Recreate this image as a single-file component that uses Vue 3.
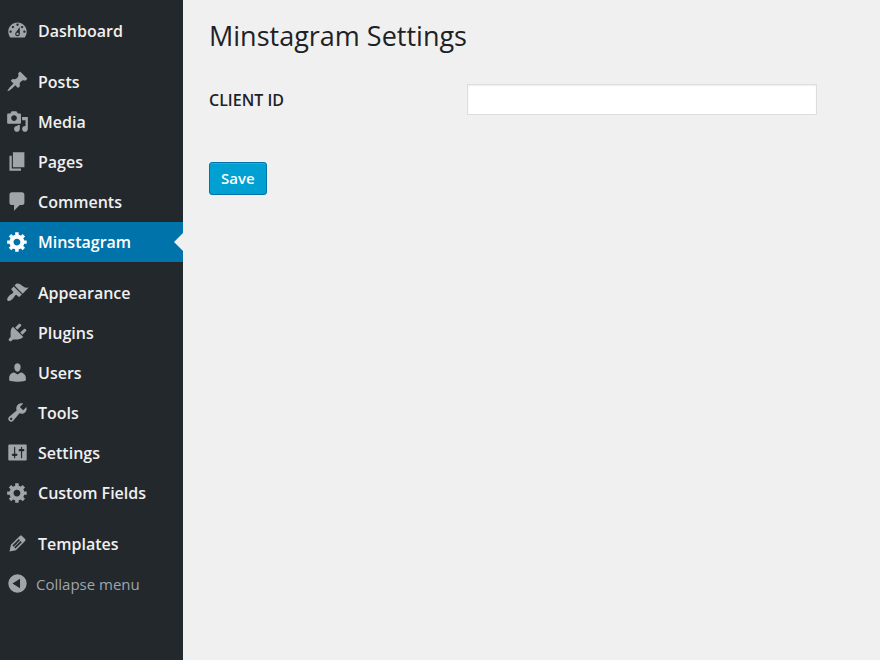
<script setup>
import { ref } from 'vue'

const clientId = ref('')

const gear =
  'M18 12h-2.18c-.17.7-.44 1.35-.81 1.93l1.54 1.54-2.1 2.1-1.54-1.54c-.58.36-1.23.63-1.91.79V19H8v-2.18c-.68-.16-1.33-.43-1.91-.79l-1.54 1.54-2.12-2.12 1.54-1.54c-.36-.58-.63-1.23-.79-1.91H1V9.03h2.17c.16-.7.44-1.35.8-1.94L2.43 5.55l2.1-2.1 1.54 1.54c.58-.37 1.24-.64 1.93-.81V2h3v2.18c.68.16 1.33.43 1.91.79l1.54-1.54 2.12 2.12-1.54 1.54c.36.59.64 1.24.8 1.94H18V12zm-8.5 1.5c1.66 0 3-1.34 3-3s-1.34-3-3-3-3 1.34-3 3 1.34 3 3 3z'

const groups = [
  [
    {
      label: 'Dashboard',
      icon: 'M3.76 16h12.48c1.1-1.37 1.76-3.11 1.76-5 0-4.42-3.58-8-8-8s-8 3.58-8 8c0 1.89.66 3.63 1.76 5zM10 4c.55 0 1 .45 1 1s-.45 1-1 1-1-.45-1-1 .45-1 1-1zM6 6c.55 0 1 .45 1 1s-.45 1-1 1-1-.45-1-1 .45-1 1-1zm8 0c.55 0 1 .45 1 1s-.45 1-1 1-1-.45-1-1 .45-1 1-1zm-5.37 5.55L12 7v6c0 1.1-.9 2-2 2s-2-.9-2-2c0-.57.24-1.08.63-1.45zM4 10c.55 0 1 .45 1 1s-.45 1-1 1-1-.45-1-1 .45-1 1-1zm12 0c.55 0 1 .45 1 1s-.45 1-1 1-1-.45-1-1 .45-1 1-1zm-5 3c0-.55-.45-1-1-1s-1 .45-1 1 .45 1 1 1 1-.45 1-1z',
    },
  ],
  [
    {
      label: 'Posts',
      icon: 'M10.44 3.02l1.82-1.82 6.36 6.35-1.83 1.82c-1.05-.68-2.48-.57-3.41.36l-.75.75c-.92.93-1.04 2.35-.35 3.41l-1.83 1.82-2.41-2.41-2.8 2.79c-.42.42-3.38 2.71-3.8 2.29s1.86-3.39 2.28-3.81l2.79-2.79L4.1 9.36l1.83-1.82c1.05.69 2.48.57 3.4-.36l.75-.75c.93-.92 1.05-2.35.36-3.41z',
    },
    {
      label: 'Media',
      icon: 'M13 11V4c0-.55-.45-1-1-1h-1.67L9 1H5L3.67 3H2c-.55 0-1 .45-1 1v7c0 .55.45 1 1 1h10c.55 0 1-.45 1-1zM7 4.5c1.38 0 2.5 1.12 2.5 2.5S8.38 9.5 7 9.5 4.5 8.38 4.5 7 5.62 4.5 7 4.5zM14 6h5v10.5c0 1.38-1.12 2.5-2.5 2.5S14 17.88 14 16.5s1.12-2.5 2.5-2.5c.17 0 .34.02.5.05V9h-3V6zm-4 8.05V13h2v3.5c0 1.38-1.12 2.5-2.5 2.5S7 17.88 7 16.5 8.12 14 9.5 14c.17 0 .34.02.5.05z',
    },
    { label: 'Pages', icon: 'M6 15V2h10v13H6zm-1 1h8v2H3V5h2v11z' },
    {
      label: 'Comments',
      icon: 'M5 2h9c1.1 0 2 .9 2 2v7c0 1.1-.9 2-2 2h-2l-5 5v-5H5c-1.1 0-2-.9-2-2V4c0-1.1.9-2 2-2z',
    },
    { label: 'Minstagram', icon: gear, current: true },
  ],
  [
    {
      label: 'Appearance',
      icon: 'M14.48 11.06L7.41 3.99l1.5-1.5c.5-.56 2.3-.47 3.51.32 1.21.8 1.43 1.28 2.91 2.1 1.18.64 2.45 1.26 4.45.85zm-.71.71L6.7 4.7 4.93 6.47c-.39.39-.39 1.02 0 1.41l1.06 1.06c.39.39.39 1.03 0 1.42-.6.6-1.43 1.11-2.21 1.69-.35.26-.7.53-1.01.84C1.43 14.23.4 16.08 1.4 17.07c.99 1 2.84-.03 4.18-1.36.31-.31.58-.66.85-1.02.57-.78 1.08-1.61 1.69-2.21.39-.39 1.02-.39 1.41 0l1.06 1.06c.39.39 1.02.39 1.41 0z',
    },
    {
      label: 'Plugins',
      icon: 'M13.11 4.36L9.87 7.6 8 5.73l3.24-3.24c.35-.34 1.05-.2 1.56.32.52.51.66 1.21.31 1.55zm-8 1.77l.91-1.12 9.01 9.01-1.19.84c-.71.71-2.63 1.16-3.82 1.16H6.14L4.9 17.26c-.59.59-1.54.59-2.12 0-.59-.58-.59-1.53 0-2.12l1.24-1.24v-3.88c0-1.13.4-3.19 1.09-3.89zm7.26 3.97l3.24-3.24c.34-.35 1.04-.21 1.55.31.52.51.66 1.21.31 1.55l-3.24 3.25z',
    },
    {
      label: 'Users',
      icon: 'M10 9.25c-2.27 0-2.73-3.44-2.73-3.44C7 4.02 7.82 2 9.97 2c2.16 0 2.98 2.02 2.71 3.81 0 0-.41 3.44-2.68 3.44zm0 2.57L12.72 10c2.39 0 4.52 2.33 4.52 4.53v2.49s-3.65 1.13-7.24 1.13c-3.65 0-7.24-1.13-7.24-1.13v-2.49c0-2.25 1.94-4.48 4.47-4.48z',
    },
    {
      label: 'Tools',
      icon: 'M16.68 9.77c-1.34 1.34-3.3 1.67-4.95.99l-5.41 6.52c-.99.99-2.59.99-3.58 0s-.99-2.59 0-3.57l6.52-5.42c-.68-1.65-.35-3.61.99-4.95 1.28-1.28 3.12-1.62 4.72-1.06l-2.89 2.89 2.82 2.82 2.86-2.87c.53 1.58.18 3.39-1.08 4.65zM3.81 16.21c.4.39 1.04.39 1.43 0 .4-.4.4-1.04 0-1.43-.39-.4-1.03-.4-1.43 0-.39.39-.39 1.03 0 1.43z',
    },
    {
      label: 'Settings',
      icon: 'M18 16V4c0-.55-.45-1-1-1H3c-.55 0-1 .45-1 1v12c0 .55.45 1 1 1h14c.55 0 1-.45 1-1zM8 11h1c.55 0 1 .45 1 1s-.45 1-1 1H8v1.5c0 .28-.22.5-.5.5s-.5-.22-.5-.5V13H6c-.55 0-1-.45-1-1s.45-1 1-1h1V5.5c0-.28.22-.5.5-.5s.5.22.5.5V11zm5-2h-1c-.55 0-1-.45-1-1s.45-1 1-1h1V5.5c0-.28.22-.5.5-.5s.5.22.5.5V7h1c.55 0 1 .45 1 1s-.45 1-1 1h-1v5.5c0 .28-.22.5-.5.5s-.5-.22-.5-.5V9z',
    },
    { label: 'Custom Fields', icon: gear },
  ],
  [
    {
      label: 'Templates',
      icon: 'M13.89 3.39l2.71 2.72c.46.46.42 1.24.03 1.64l-8.01 8.02-5.56 1.16 1.16-5.58s7.6-7.63 7.99-8.03c.39-.39 1.22-.39 1.68.07zm-2.73 2.79l-5.59 5.61 1.11 1.11 5.54-5.65zm-2.97 8.23l5.58-5.6-1.07-1.08-5.59 5.6z',
    },
  ],
]
</script>

<template>
  <div class="admin">
    <nav class="sidebar" aria-label="Main menu">
      <ul v-for="(group, i) in groups" :key="i" class="group">
        <li v-for="item in group" :key="item.label">
          <a
            href="#"
            class="item"
            :class="{ current: item.current }"
            :aria-current="item.current ? 'page' : null"
          >
            <svg class="icon" viewBox="0 0 20 20" aria-hidden="true">
              <path :d="item.icon" fill-rule="evenodd" />
            </svg>
            {{ item.label }}
          </a>
        </li>
      </ul>
      <button type="button" class="item collapse">
        <svg class="icon" viewBox="0 0 20 20" aria-hidden="true">
          <path d="M10 2a8 8 0 1 0 0 16 8 8 0 0 0 0-16zM12.2 5.8v8.4L5.6 10z" fill-rule="evenodd" />
        </svg>
        Collapse menu
      </button>
    </nav>

    <main class="content">
      <h1 class="title">Minstagram Settings</h1>
      <form @submit.prevent>
        <div class="field">
          <label for="client-id">CLIENT ID</label>
          <input id="client-id" v-model="clientId" type="text" />
        </div>
        <button type="submit" class="save">Save</button>
      </form>
    </main>
  </div>
</template>

<style>
body {
  background: #f0f0f0;
}
</style>

<style scoped>
.admin {
  display: grid;
  grid-template-columns: 183px 1fr;
  min-height: 100vh;
  font-family: 'Open Sans', 'Noto Sans', sans-serif;
  font-size: 16px;
  line-height: 24px;
  color: #1d2226;
}

.sidebar {
  padding: 11px 0;
  background: #23282d;
}

.group {
  margin: 0;
  padding: 0;
  list-style: none;
}

.group + .group {
  margin-top: 11px;
}

.item {
  position: relative;
  display: flex;
  align-items: center;
  gap: 9px;
  box-sizing: border-box;
  width: 100%;
  height: 40px;
  padding: 0 6px 1px;
  color: #f0f0f0;
  font-weight: 600;
  text-decoration: none;
  white-space: nowrap;
}

.icon {
  flex: none;
  width: 23px;
  height: 23px;
  fill: #a0a5aa;
}

.current {
  background: #0073aa;
  color: #fff;
}

.current .icon {
  fill: #fff;
}

.current::after {
  content: '';
  position: absolute;
  top: 50%;
  right: 0;
  border: 9px solid transparent;
  border-left-width: 0;
  border-right-color: #f0f0f0;
  transform: translateY(-50%);
}

.collapse {
  gap: 7px;
  border: 0;
  background: none;
  color: #a0a5aa;
  font: inherit;
  font-size: 15px;
  text-align: left;
  cursor: pointer;
}

.content {
  padding: 16px 26px;
}

.title {
  margin: 0 0 28px;
  font-size: 27px;
  font-weight: 400;
  line-height: 40px;
}

.field {
  display: grid;
  grid-template-columns: 258px minmax(0, 350px);
  align-items: center;
  margin-bottom: 47px;
}

.field label {
  font-weight: 600;
}

.field input {
  box-sizing: border-box;
  width: 100%;
  height: 31px;
  padding: 3px 6px;
  border: 1px solid #ddd;
  border-radius: 0;
  background: #fff;
  box-shadow: inset 0 1px 2px rgba(0, 0, 0, 0.07);
  color: #32373c;
  font: inherit;
}

.save {
  height: 33px;
  padding: 0 11px 2px;
  border: 1px solid #0073aa;
  border-radius: 3px;
  background: #00a0d2;
  box-shadow: inset 0 1px 0 rgba(120, 200, 230, 0.3);
  color: #fff;
  font: inherit;
  font-size: 15px;
  font-weight: 600;
  cursor: pointer;
}
</style>
